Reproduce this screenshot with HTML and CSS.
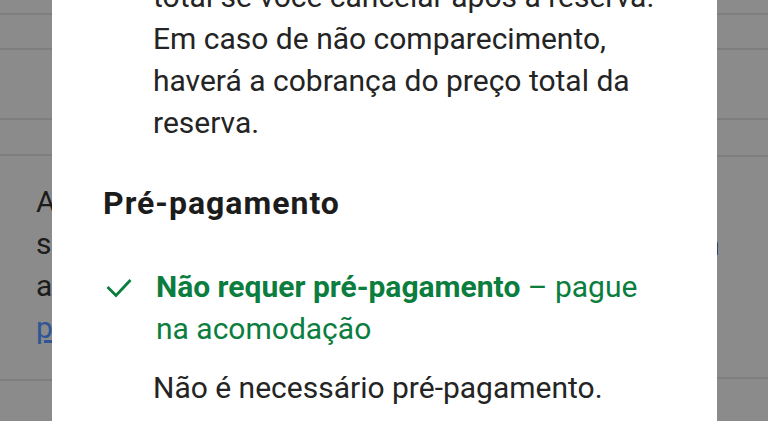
FILE: index.html
```html
<!DOCTYPE html>
<html lang="pt">
<head>
    <meta charset="UTF-8">
    <meta name="viewport" content="width=device-width, initial-scale=1.0">
    <title>Política de cancelamento</title>
    <link rel="stylesheet" href="styles.css">
</head>
<body>
    <div class="screen">
        <div class="side side-left">
            <div class="row r1"></div>
            <div class="row r2"></div>
            <div class="row r3"></div>
            <div class="row r4"></div>
            <div class="row r5">
                <p>A</p>
                <p>s</p>
                <p>a</p>
                <p><a href="#">p</a></p>
            </div>
            <div class="row r6"></div>
        </div>

        <div class="modal">
            <p class="policy">total se você cancelar após a reserva. Em caso de não comparecimento, haverá a cobrança do preço total da reserva.</p>

            <h3>Pré-pagamento</h3>

            <div class="item">
                <svg class="check" width="26" height="20" viewBox="0 0 26 20">
                    <polyline points="1.5,9 10,17.5 24.5,2" fill="none" stroke="#0b7d3e" stroke-width="2.8"/>
                </svg>
                <p class="good"><b>Não requer pré-pagamento</b> – pague na acomodação</p>
            </div>
            <p class="note">Não é necessário pré-pagamento.</p>
        </div>

        <div class="side side-right">
            <div class="row r1"></div>
            <div class="row r2"></div>
            <div class="row r3"></div>
            <div class="row r4b"></div>
            <div class="row r5b">
                <p>&nbsp;</p>
                <p class="tail">n</p>
            </div>
            <div class="row r6"></div>
        </div>
    </div>
</body>
</html>
```

FILE: styles.css
```css
*{
    margin: 0;
    padding: 0;
    box-sizing: border-box;
}
body{
    background-color: #8b8b8b;
    font-family: Roboto, "Noto Sans", sans-serif;
    overflow: hidden;
}
.screen{
    display: flex;
    height: 421px;
    overflow: hidden;
}

/* page behind the dialog, dimmed */
.side{
    background-color: #8b8b8b;
    overflow: hidden;
    color: #1c1c1c;
    font-size: 30px;
    line-height: 42px;
}
.side-left{
    width: 52px;
}
.side-right{
    width: 51px;
}
.row{
    border-bottom: 2px solid #7e7e7e;
}
.r1{ height: 15px; }
.r2{ height: 35px; }
.r3{ height: 70px; }
.r4{ height: 36px; }
.r4b{ height: 37px; }
.r5{
    height: 225px;
    padding: 25px 0 0 36px;
    white-space: nowrap;
}
.r5b{
    height: 222px;
    padding: 25px 0 0 0;
}
.r6{
    border-bottom: none;
    height: 60px;
}
.side a{
    color: #2f5597;
}
.tail{
    margin-left: -14px;
}

/* dialog */
.modal{
    width: 665px;
    background-color: #fff;
    padding: 0 52px 0 51px;
    color: #242424;
    position: relative;
    z-index: 1;
}
.policy{
    font-size: 30px;
    line-height: 42px;
    margin: -24px 0 0 50px;
}
.modal h3{
    font-size: 32px;
    font-weight: 700;
    letter-spacing: 1px;
    line-height: 40px;
    margin-top: 39px;
    color: #1c1c1c;
}
.item{
    display: flex;
    margin-top: 43px;
}
.check{
    flex: none;
    width: 26px;
    margin: 12px 24px 0 3px;
}
.good{
    color: #0b7d3e;
    font-size: 30px;
    line-height: 42px;
}
.good b{
    font-weight: 700;
}
.note{
    font-size: 30px;
    line-height: 42px;
    margin: 17px 0 0 50px;
}
```
